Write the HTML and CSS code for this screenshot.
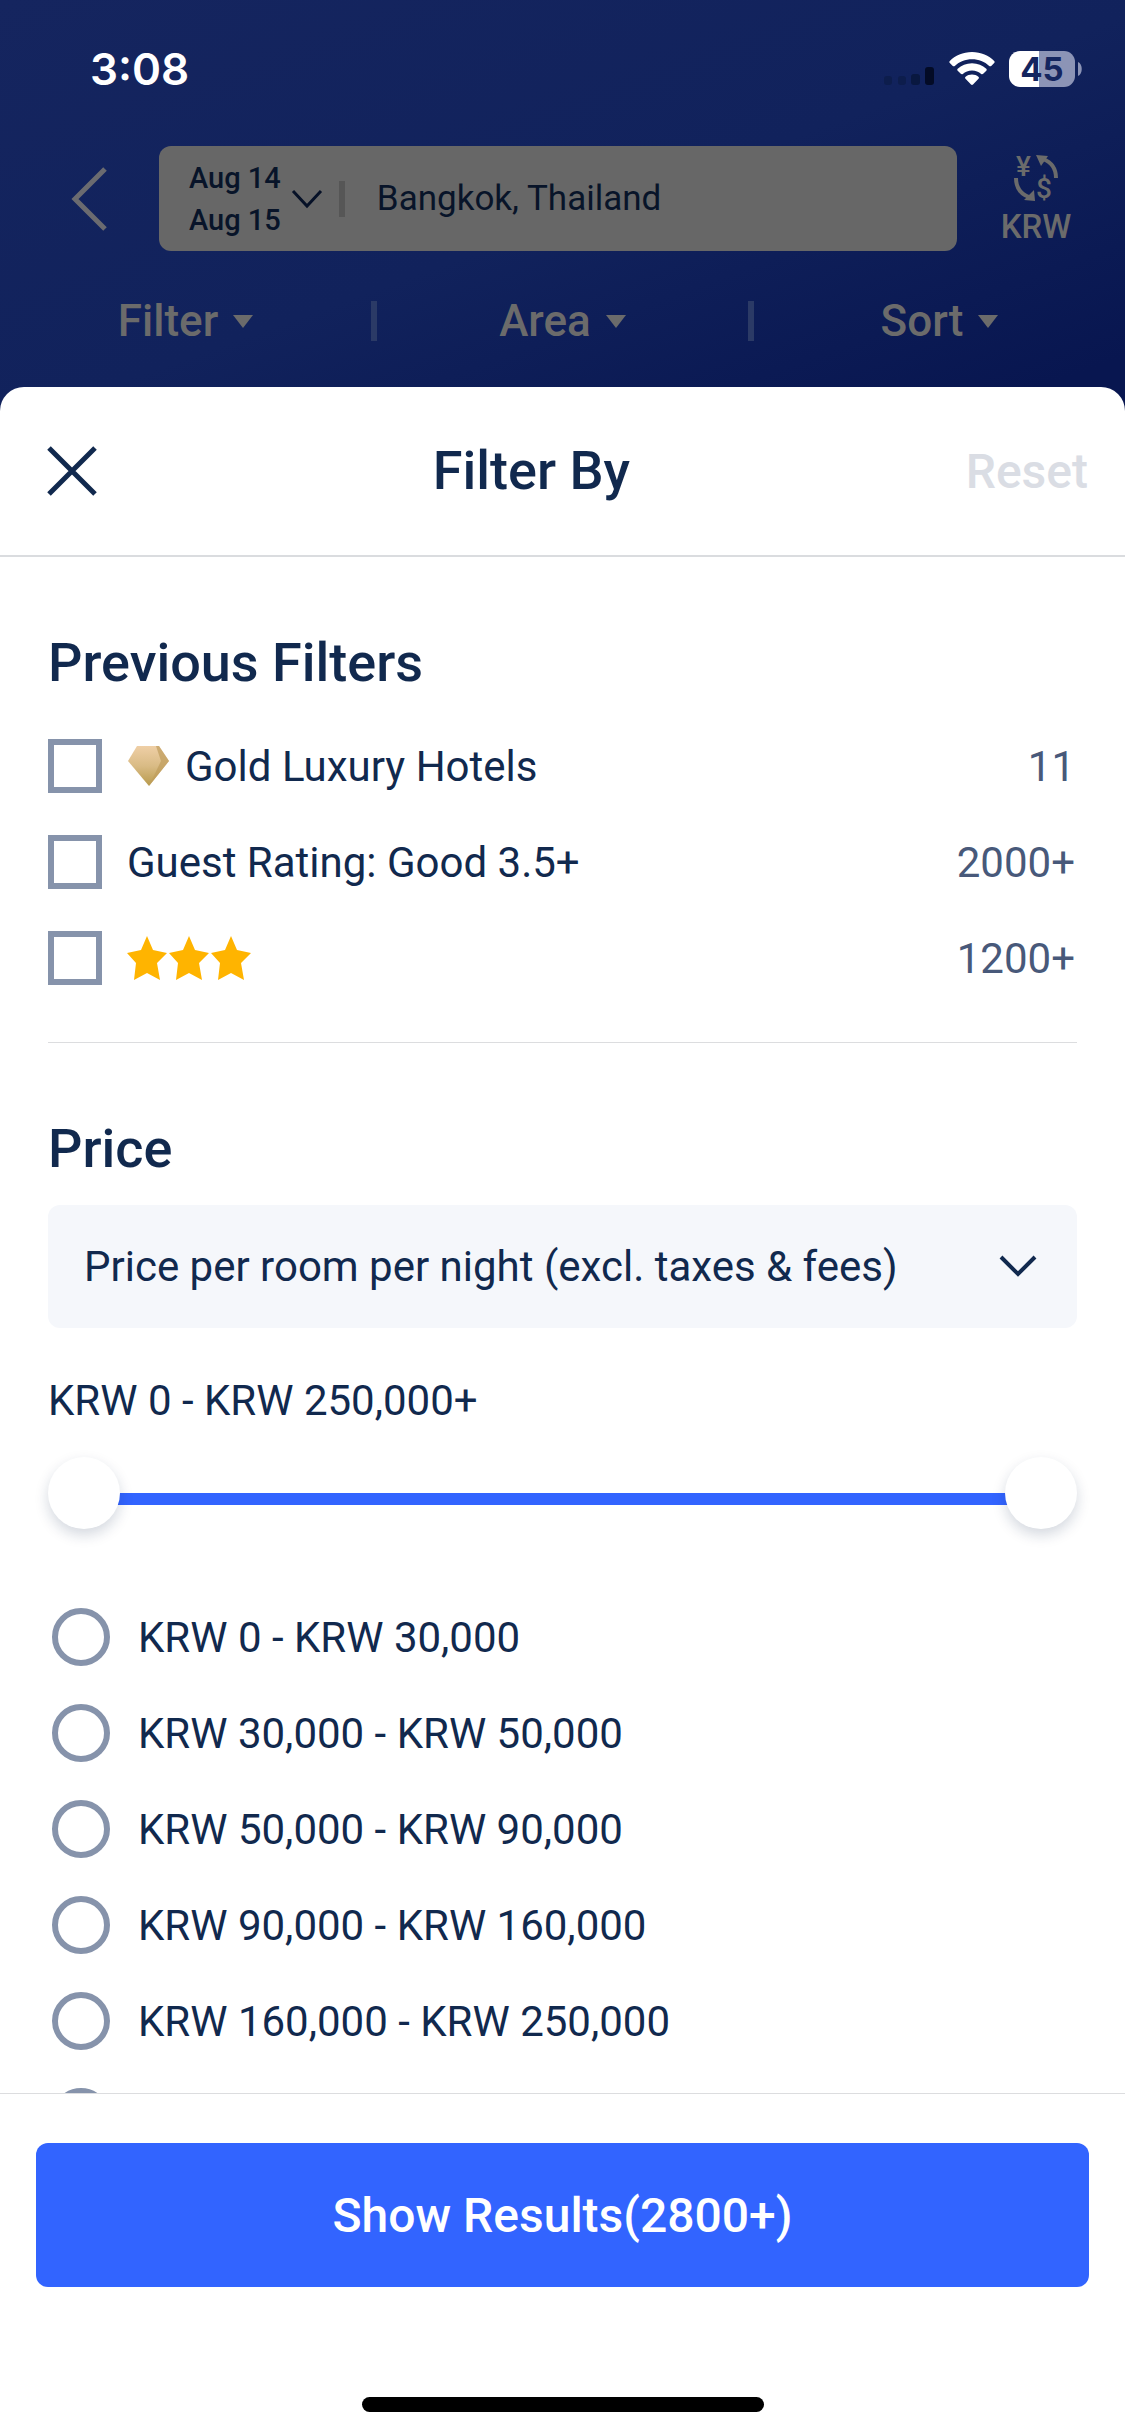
FILE: index.html
```
<!DOCTYPE html>
<html lang="en">
<head>
    <meta charset="UTF-8">
    <meta name="viewport" content="width=device-width, initial-scale=1.0">
    <title>Filter By</title>
    <link rel="stylesheet" href="styles.css">
</head>
<body>
    <header class="top">
        <div class="status-bar">
            <span class="time">3:08</span>
            <div class="status-icons">
                <svg width="52" height="34" viewBox="0 0 52 34">
                    <rect x="1" y="24" width="8" height="9" rx="3" fill="#0d1d4c"/>
                    <rect x="15" y="24" width="8" height="9" rx="3" fill="#0d1d4c"/>
                    <rect x="28" y="22" width="9" height="11" rx="3" fill="#091840"/>
                    <rect x="42" y="15" width="9" height="18" rx="3" fill="#030b26"/>
                </svg>
                <svg width="46" height="34" viewBox="0 0 46 34" fill="#fff">
                    <path d="M23 0C14 0 6 3.500 0.800 8.900C0.200 9.500 0.200 10.300 0.800 10.900L3.800 13.900C4.400 14.500 5.200 14.500 5.800 13.900C10.300 9.600 16.300 7.200 23 7.200S35.700 9.600 40.200 13.900C40.800 14.500 41.600 14.500 42.200 13.900L45.200 10.900C45.800 10.300 45.800 9.500 45.200 8.900C40 3.500 32 0 23 0Z"/>
                    <path d="M23 11.300C17.300 11.300 12.400 13.400 8.700 16.800C8.100 17.400 8.100 18.200 8.700 18.800L11.800 21.800C12.400 22.400 13.200 22.400 13.800 21.900C16.200 19.700 19.400 18.400 23 18.400S29.800 19.700 32.200 21.900C32.800 22.400 33.600 22.400 34.200 21.800L37.300 18.800C37.900 18.200 37.900 17.400 37.300 16.800C33.600 13.400 28.700 11.300 23 11.300Z"/>
                    <path d="M23 22.500C20.500 22.500 18.300 23.300 16.600 24.700C15.900 25.300 15.900 26.100 16.500 26.700L22 32.600C22.600 33.200 23.400 33.200 24 32.600L29.500 26.700C30.100 26.100 30.100 25.300 29.400 24.700C27.700 23.300 25.500 22.500 23 22.500Z"/>
                </svg>
                <div class="battery">
                    <span class="battery-level">45</span>
                    <svg width="4" height="14" viewBox="0 0 4 14"><path d="M0 0C5 2 5 12 0 14Z" fill="#8c94b6"/></svg>
                </div>
            </div>
        </div>

        <div class="search-row">
            <button class="back" aria-label="Back">
                <svg width="38" height="64" viewBox="0 0 38 64"><path d="M35 2L5 32L35 62" fill="none" stroke="#6b6b70" stroke-width="5"/></svg>
            </button>
            <div class="search-box">
                <button class="dates">
                    <span>Aug 14<br>Aug 15</span>
                    <svg width="32" height="20" viewBox="0 0 32 20"><path d="M2 2L16 17L30 2" fill="none" stroke="#061127" stroke-width="3"/></svg>
                </button>
                <button class="place">Bangkok, Thailand</button>
            </div>
            <button class="currency">
                <svg width="54" height="56" viewBox="-4 -4 54 56">
                    <path d="M30 4C38 7 43 13 43 23" fill="none" stroke="#6b6b6b" stroke-width="4"/>
                    <path d="M23 0L35 1L28 11Z" fill="#6b6b6b"/>
                    <path d="M3 23C3 33 8 39 16 42" fill="none" stroke="#6b6b6b" stroke-width="4"/>
                    <path d="M22 46L11 45L21 35Z" fill="#6b6b6b"/>
                    <text x="3" y="21" class="sign">¥</text>
                    <text x="23" y="43" class="sign">$</text>
                </svg>
                KRW
            </button>
        </div>

        <nav class="tabs">
            <button class="tab">Filter <i class="caret"></i></button>
            <button class="tab">Area <i class="caret"></i></button>
            <button class="tab">Sort <i class="caret"></i></button>
        </nav>
    </header>

    <main class="sheet">
        <div class="sheet-header">
            <button class="close" aria-label="Close">
                <svg width="50" height="50" viewBox="0 0 50 50"><path d="M2 2L48 48M48 2L2 48" stroke="#11294e" stroke-width="5"/></svg>
            </button>
            <h1>Filter By</h1>
            <button class="reset">Reset</button>
        </div>

        <form class="sheet-body" id="filter-form">
            <section class="previous">
                <h2>Previous Filters</h2>
                <label class="check-row">
                    <input type="checkbox" name="previous" value="gold">
                    <span class="check-label">
                        <svg class="diamond" width="42" height="40" viewBox="0 0 42 40">
                            <defs>
                                <linearGradient id="gold" x1="0" y1="0" x2="0" y2="1">
                                    <stop offset="0" stop-color="#efcfa6"/>
                                    <stop offset="0.5" stop-color="#d9bb85"/>
                                    <stop offset="1" stop-color="#b89a4c"/>
                                </linearGradient>
                            </defs>
                            <path d="M10 0H32L42 15L22 40L1 15Z" fill="url(#gold)"/>
                            <path d="M29 0H32L42 15L22 40L34 15Z" fill="#bf9d5c" opacity="0.7"/>
                        </svg>
                        Gold Luxury Hotels
                    </span>
                    <span class="count">11</span>
                </label>
                <label class="check-row">
                    <input type="checkbox" name="previous" value="rating">
                    <span class="check-label">Guest Rating: Good 3.5+</span>
                    <span class="count">2000+</span>
                </label>
                <label class="check-row">
                    <input type="checkbox" name="previous" value="stars" aria-label="3 stars">
                    <span class="check-label stars">
                        <svg width="40" height="44" viewBox="0 0 40 44"><path d="M20 0L26 14L40 17L30 27L33 44L20 37L7 44L9 27L0 17L14 14Z"/></svg>
                        <svg width="40" height="44" viewBox="0 0 40 44"><path d="M20 0L26 14L40 17L30 27L33 44L20 37L7 44L9 27L0 17L14 14Z"/></svg>
                        <svg width="40" height="44" viewBox="0 0 40 44"><path d="M20 0L26 14L40 17L30 27L33 44L20 37L7 44L9 27L0 17L14 14Z"/></svg>
                    </span>
                    <span class="count">1200+</span>
                </label>
            </section>

            <section class="price">
                <h2>Price</h2>
                <div class="select-box">
                    <select name="price-type" aria-label="Price type">
                        <option>Price per room per night (excl. taxes &amp; fees)</option>
                    </select>
                    <svg width="38" height="24" viewBox="0 0 38 24"><path d="M2 2L19 19L36 2" fill="none" stroke="#11294e" stroke-width="4"/></svg>
                </div>
                <p class="range-text">KRW 0 - KRW 250,000+</p>
                <div class="slider">
                    <input type="range" min="0" max="250000" value="0" aria-label="Minimum price">
                    <input type="range" min="0" max="250000" value="250000" aria-label="Maximum price">
                </div>
                <div class="options">
                    <label><input type="radio" name="price">KRW 0 - KRW 30,000</label>
                    <label><input type="radio" name="price">KRW 30,000 - KRW 50,000</label>
                    <label><input type="radio" name="price">KRW 50,000 - KRW 90,000</label>
                    <label><input type="radio" name="price">KRW 90,000 - KRW 160,000</label>
                    <label><input type="radio" name="price">KRW 160,000 - KRW 250,000</label>
                    <label><input type="radio" name="price" aria-label="KRW 250,000+"></label>
                </div>
            </section>
        </form>

        <footer class="sheet-footer">
            <button class="show" form="filter-form">Show Results(2800+)</button>
            <div class="home-bar"></div>
        </footer>
    </main>
</body>
</html>
```
FILE: styles.css
```
* {
    box-sizing: border-box;
}
body {
    font-family: Roboto, "Noto Sans", sans-serif;
    margin: 0;
    height: 100vh;
    display: flex;
    flex-direction: column;
    color: #11294e;
    font-size: 42px;
    background: linear-gradient(160deg, #15255f 0, #11225c 400px, #081650 720px);
}
button {
    font: inherit;
    color: inherit;
    background: none;
    border: 0;
    padding: 0;
}
svg {
    display: block;
    flex: none;
}
h1, h2, p {
    margin: 0;
}
h1, h2 {
    font-size: 54px;
    font-weight: 500;
    line-height: 64px;
}

/* status bar */
.status-bar {
    display: flex;
    justify-content: space-between;
    align-items: center;
    height: 138px;
    padding: 0 43px 0 90px;
}
.time {
    font-family: Inter, sans-serif;
    font-size: 44px;
    font-weight: 600;
    color: #fff;
}
.status-icons {
    display: flex;
    align-items: center;
    gap: 14px;
}
.battery {
    display: flex;
    align-items: center;
    gap: 3px;
}
.battery-level {
    width: 66px;
    height: 36px;
    border-radius: 11px;
    background: linear-gradient(to right, #fff 45%, #8c94b6 45%);
    color: #14255f;
    font-family: Inter, sans-serif;
    font-size: 33px;
    font-weight: 700;
    line-height: 36px;
    text-align: center;
}

/* search */
.search-row {
    display: flex;
    align-items: center;
    padding: 8px 54px 0 70px;
}
.back {
    width: 89px;
}
.search-box {
    flex: 1;
    height: 105px;
    display: flex;
    align-items: center;
    padding-left: 30px;
    background: #676767;
    border-radius: 12px;
    color: #081429;
}
.dates {
    display: flex;
    align-items: center;
    gap: 10px;
    font-size: 29px;
    font-weight: 500;
    line-height: 42px;
    text-align: left;
}
.place {
    flex: 1;
    margin-left: 16px;
    padding-left: 32px;
    font-size: 35px;
    line-height: 36px;
    text-align: left;
    border-left: 6px solid #565656;
}
.currency {
    width: 70px;
    margin-left: 44px;
    display: flex;
    flex-direction: column;
    align-items: center;
    font-size: 33px;
    font-weight: 500;
    line-height: 40px;
    color: #6b6b6b;
}
.sign {
    font-size: 28px;
    font-weight: 500;
    fill: #6b6b6b;
}

/* tabs */
.tabs {
    display: flex;
    padding: 50px 0 46px;
}
.tab {
    flex: 1;
    display: flex;
    justify-content: center;
    align-items: center;
    gap: 15px;
    height: 40px;
    font-size: 44px;
    font-weight: 500;
    line-height: 40px;
    color: #6b6b6b;
}
.tab + .tab {
    border-left: 6px solid #2b3a66;
}
.caret {
    border: 10px solid transparent;
    border-top: 13px solid #6b6b6b;
    border-bottom: 0;
}

/* sheet */
.sheet {
    flex: 1;
    min-height: 0;
    display: flex;
    flex-direction: column;
    background: #fff;
    border-radius: 24px 24px 0 0;
}
.sheet-header {
    display: flex;
    justify-content: space-between;
    align-items: center;
    height: 170px;
    padding: 0 37px 0 47px;
    border-bottom: 2px solid #dadcdf;
}
.reset {
    font-size: 48px;
    font-weight: 500;
    color: #dadde4;
}
.sheet-body {
    flex: 1;
    min-height: 0;
    overflow-y: auto;
    scrollbar-width: none;
    padding: 0 48px;
}
section {
    padding-top: 74px;
}

/* previous filters */
.previous {
    border-bottom: 1px solid #dcdddf;
    padding-bottom: 36px;
}
.previous h2 {
    margin-bottom: 23px;
}
.check-row {
    display: flex;
    align-items: center;
    height: 96px;
}
input[type="checkbox"] {
    appearance: none;
    width: 54px;
    height: 54px;
    margin: 0;
    border: 6px solid #8693ab;
}
input[type="checkbox"]:checked {
    background: #3264ff;
}
.check-label {
    flex: 1;
    display: flex;
    align-items: center;
    gap: 16px;
    margin-left: 25px;
}
.stars {
    gap: 2px;
    fill: #ffb400;
}
.count {
    margin-right: 2px;
    color: #48597a;
}

/* price */
.price h2 {
    margin-bottom: 24px;
}
.select-box {
    display: grid;
    align-items: center;
}
.select-box select,
.select-box svg {
    grid-area: 1 / 1;
}
.select-box select {
    appearance: none;
    width: 100%;
    height: 123px;
    padding: 0 36px;
    border: 0;
    border-radius: 12px;
    background: #f5f7fb;
    color: inherit;
    font: inherit;
}
.select-box svg {
    justify-self: end;
    margin-right: 40px;
    pointer-events: none;
}
.range-text {
    margin: 48px 0 31px;
    line-height: 50px;
}
.slider {
    display: grid;
    height: 72px;
    background: linear-gradient(#3264ff, #3264ff) center 36px / calc(100% - 72px) 12px no-repeat;
}
.slider input {
    grid-area: 1 / 1;
    appearance: none;
    width: 100%;
    height: 72px;
    margin: 0;
    background: none;
    pointer-events: none;
}
.slider input::-webkit-slider-thumb {
    appearance: none;
    width: 72px;
    height: 72px;
    border-radius: 50%;
    background: #fff;
    box-shadow: 0 6px 14px rgba(17, 41, 78, 0.18);
    pointer-events: auto;
}
.options {
    padding: 60px 4px 0;
}
.options label {
    display: flex;
    align-items: center;
    gap: 28px;
    height: 96px;
}
input[type="radio"] {
    appearance: none;
    width: 58px;
    height: 58px;
    margin: 0;
    border: 6px solid #8693ab;
    border-radius: 50%;
}
input[type="radio"]:checked {
    border: 18px solid #3264ff;
}

/* footer */
.sheet-footer {
    display: flex;
    flex-direction: column;
    align-items: center;
    padding: 49px 36px 24px;
    border-top: 1px solid #dcdddf;
}
.show {
    width: 100%;
    height: 144px;
    border-radius: 12px;
    background: #3264ff;
    color: #fff;
    font-size: 48px;
    font-weight: 500;
}
.home-bar {
    width: 402px;
    height: 15px;
    margin-top: 110px;
    border-radius: 8px;
    background: #000;
}
```
